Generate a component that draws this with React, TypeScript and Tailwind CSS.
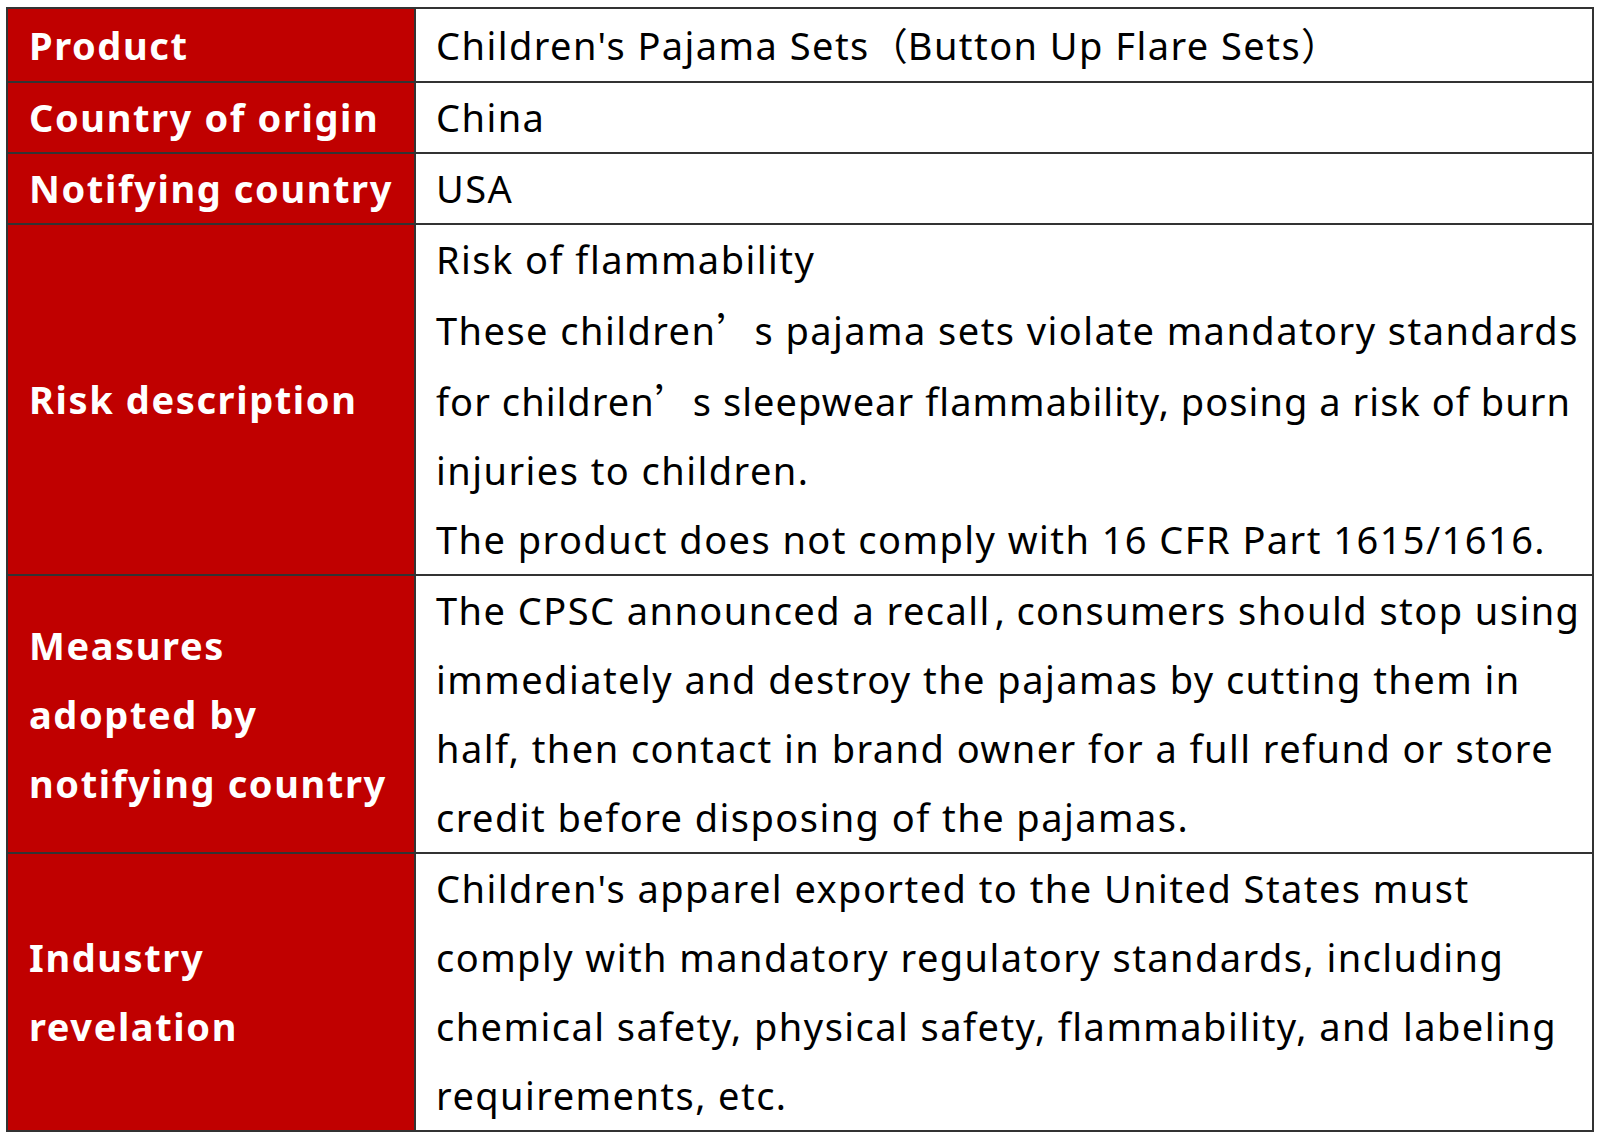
import React from "react";

const cjk = "font-['Noto_Sans_CJK_SC'] tracking-normal";
const Q = () => <span className={cjk}>’</span>;

const rows: { label: React.ReactNode; lines: React.ReactNode[]; h: string }[] = [
  {
    label: "Product",
    lines: [
      <>
        Children's Pajama Sets<span className={cjk}>（</span>Button Up Flare Sets<span className={cjk}>）</span>
      </>,
    ],
    h: "h-[74px]",
  },
  { label: "Country of origin", lines: ["China"], h: "h-[71px]" },
  { label: "Notifying country", lines: ["USA"], h: "h-[71px]" },
  {
    label: "Risk description",
    lines: [
      "Risk of flammability",
      <>
        These children<Q />s pajama sets violate mandatory standards
      </>,
      <span className="tracking-[1.05px]">
        for children<Q />s sleepwear flammability, posing a risk of burn
      </span>,
      "injuries to children.",
      "The product does not comply with 16 CFR Part 1615/1616.",
    ],
    h: "h-[343px]",
  },
  {
    label: (
      <>
        <div>Measures</div>
        <div>adopted by</div>
        <div>notifying country</div>
      </>
    ),
    lines: [
      <>
        The CPSC announced a recall<span className="ml-[4px] mr-[10px]">,</span>consumers should stop using
      </>,
      "immediately and destroy the pajamas by cutting them in",
      "half, then contact in brand owner for a full refund or store",
      "credit before disposing of the pajamas.",
    ],
    h: "h-[278px]",
  },
  {
    label: (
      <>
        <div>Industry</div>
        <div>revelation</div>
      </>
    ),
    lines: [
      "Children's apparel exported to the United States must",
      "comply with mandatory regulatory standards, including",
      "chemical safety, physical safety, flammability, and labeling",
      "requirements, etc.",
    ],
    h: "h-[275px]",
  },
];

export default function App() {
  return (
    <div className="w-[1600px] h-[1138px] overflow-hidden bg-white pt-[7px] pl-[6px] font-['Noto_Sans',sans-serif]">
      <table className="w-[1588px] table-fixed border-collapse">
        <colgroup>
          <col className="w-[408px]" />
          <col />
        </colgroup>
        <tbody>
          {rows.map((r, i) => (
            <tr key={i} className={r.h}>
              <td className="border-2 border-[#333333] bg-[#c00000] pl-[21px] pr-0 align-middle text-[38px] leading-[69px] tracking-[1.6px] font-bold text-white whitespace-nowrap">
                {r.label}
              </td>
              <td className="border-2 border-[#333333] bg-white pl-[20px] pr-0 align-top text-[38px] leading-[69px] tracking-[1.45px] text-black">
                {r.lines.map((l, j) => (
                  <div key={j} className="whitespace-nowrap">
                    {l}
                  </div>
                ))}
              </td>
            </tr>
          ))}
        </tbody>
      </table>
    </div>
  );
}
